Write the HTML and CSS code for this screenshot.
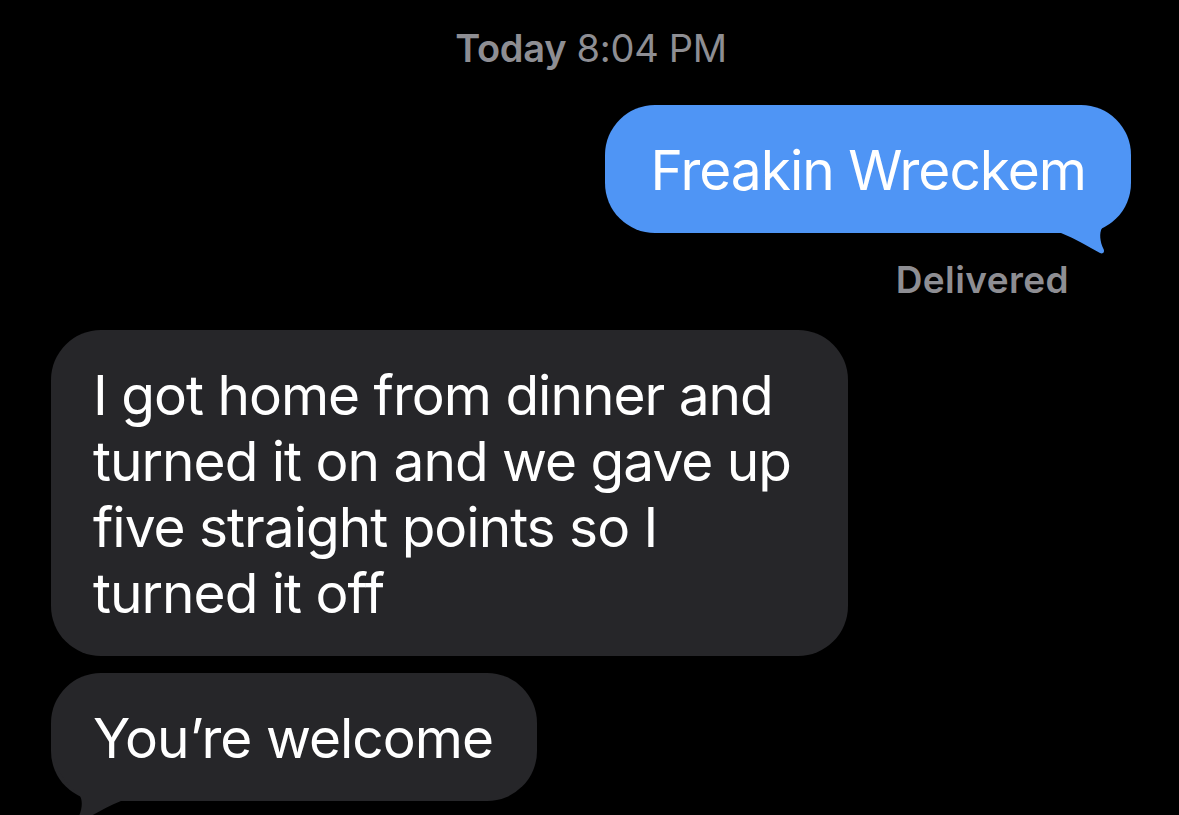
FILE: index.html
```html
<!DOCTYPE html>
<html lang="en">
<head>
<meta charset="utf-8">
<title>Messages</title>
<link rel="stylesheet" href="styles.css">
</head>
<body>
<main class="thread">
  <p class="stamp"><span class="day">Today</span> 8:04 PM</p>
  <div class="bubble sent">
    <span class="text">Freakin Wreckem</span>
    <svg class="tail" viewBox="-80 -50 86 76" width="86" height="76" aria-hidden="true">
      <path d="M -70 -48 L -70 0 C -55 6, -42 14, -31 20 C -28 21.5, -26 19, -27.5 16 C -31 9, -32 0, -29 -5 C -24 -11, -10 -20, -3 -42 L -3 -48 Z"/>
    </svg>
  </div>
  <p class="status">Delivered</p>
  <div class="bubble received wide">
    <span class="text">I got home from dinner and turned it on and we gave up five straight points so I turned it off</span>
  </div>
  <div class="bubble received last">
    <span class="text">You’re welcome</span>
    <svg class="tail flip" viewBox="-80 -50 86 76" width="86" height="76" aria-hidden="true">
      <path d="M -70 -48 L -70 0 C -55 6, -42 14, -31 20 C -28 21.5, -26 19, -27.5 16 C -31 9, -32 0, -29 -5 C -24 -11, -10 -20, -3 -42 L -3 -48 Z"/>
    </svg>
  </div>
</main>
</body>
</html>
```
FILE: styles.css
```css
html, body {
  margin: 0;
  background: #000;
  height: 815px;
  overflow: hidden;
}

.thread {
  display: flex;
  flex-direction: column;
  padding: 0 48px 0 51px;
  font-family: Inter, "Noto Sans", sans-serif;
}

.stamp {
  margin: 25px 0 0;
  align-self: center;
  font-size: 38px;
  line-height: 46px;
  letter-spacing: -0.3px;
  color: #8e8e93;
}

.day {
  font-weight: 600;
}

.bubble {
  position: relative;
  box-sizing: border-box;
  font-size: 55px;
  line-height: 66px;
  letter-spacing: -1px;
  color: #fff;
  border-radius: 50px;
}

.text {
  position: relative;
  z-index: 1;
}

.sent {
  align-self: flex-end;
  margin-top: 34px;
  padding: 32px 45px 30px 46px;
  background: #4f95f5;
  fill: #4f95f5;
}

.status {
  align-self: flex-end;
  margin: 26px 62px 0 0;
  font-size: 37px;
  line-height: 42px;
  font-weight: 600;
  letter-spacing: 0.4px;
  color: #8e8e93;
}

.received {
  align-self: flex-start;
  padding: 32px 44px 30px 42px;
  background: #262629;
  fill: #262629;
}

.wide {
  max-width: 797px;
  margin-top: 29px;
}

.last {
  margin-top: 17px;
}

.tail {
  position: absolute;
  right: -6px;
  bottom: -26px;
}

.tail.flip {
  right: auto;
  left: -6px;
  transform: scaleX(-1);
}
```
